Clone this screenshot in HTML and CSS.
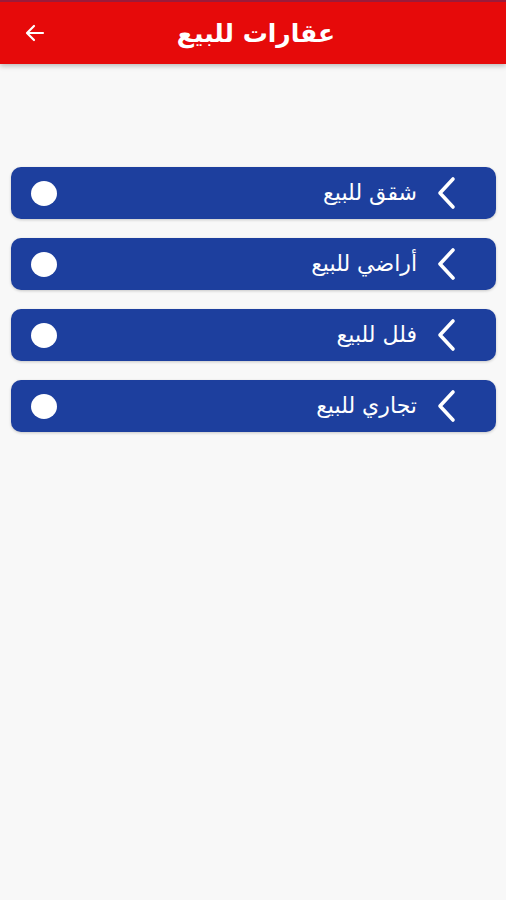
FILE: index.html
```html
<!DOCTYPE html>
<html lang="ar" dir="rtl">
<head>
<meta charset="utf-8">
<link rel="stylesheet" href="styles.css">
</head>
<body>
<header class="appbar">
  <h1 class="title">عقارات للبيع</h1>
  <span class="back">
    <svg width="24" height="24" viewBox="0 0 24 24"><path d="M20 12H5M11 5l-7 7 7 7" fill="none" stroke="#fff" stroke-width="2.2" stroke-linecap="round" stroke-linejoin="round"/></svg>
  </span>
</header>
<main class="list">
  <div class="card"><svg class="chev" width="22" height="34" viewBox="0 0 22 34"><path d="M18 3L5 17l13 14" fill="none" stroke="#fff" stroke-width="3.6" stroke-linecap="round" stroke-linejoin="round"/></svg><span class="label">شقق للبيع</span><span class="dot"></span></div>
  <div class="card"><svg class="chev" width="22" height="34" viewBox="0 0 22 34"><path d="M18 3L5 17l13 14" fill="none" stroke="#fff" stroke-width="3.6" stroke-linecap="round" stroke-linejoin="round"/></svg><span class="label">أراضي للبيع</span><span class="dot"></span></div>
  <div class="card"><svg class="chev" width="22" height="34" viewBox="0 0 22 34"><path d="M18 3L5 17l13 14" fill="none" stroke="#fff" stroke-width="3.6" stroke-linecap="round" stroke-linejoin="round"/></svg><span class="label">فلل للبيع</span><span class="dot"></span></div>
  <div class="card"><svg class="chev" width="22" height="34" viewBox="0 0 22 34"><path d="M18 3L5 17l13 14" fill="none" stroke="#fff" stroke-width="3.6" stroke-linecap="round" stroke-linejoin="round"/></svg><span class="label">تجاري للبيع</span><span class="dot"></span></div>
</main>
</body>
</html>
```
FILE: styles.css
```css
html, body {
  margin: 0;
  padding: 0;
  background: #f8f8f8;
  height: 100%;
}
body {
  font-family: "DejaVu Sans", "Noto Sans", sans-serif;
}
.appbar {
  position: relative;
  height: 64px;
  background: #e60a0a;
  border-top: 2px solid #9b1b3a;
  box-sizing: border-box;
  box-shadow: 0 2px 5px rgba(0,0,0,0.25);
  display: flex;
  align-items: center;
  justify-content: center;
}
.title {
  margin: 0 0 0 6px;
  color: #fff;
  font-size: 25px;
  font-weight: bold;
  line-height: 1;
}
.back {
  position: absolute;
  left: 23px;
  top: 19px;
  width: 24px;
  height: 24px;
}
.list {
  display: flex;
  flex-direction: column;
  gap: 19px;
  padding: 103px 10px 0 11px;
}
.card {
  height: 52px;
  background: #1d3f9e;
  border-radius: 10px;
  box-shadow: 0 1px 3px rgba(0,0,0,0.2);
  display: flex;
  align-items: center;
  padding: 0 39px 0 20px;
  color: #fff;
}
.chev {
  flex: none;
}
.label {
  margin-right: 18px;
  font-size: 22px;
  line-height: 1;
}
.dot {
  margin-right: auto;
  width: 26px;
  height: 25px;
  border-radius: 50%;
  background: #fff;
}
```
